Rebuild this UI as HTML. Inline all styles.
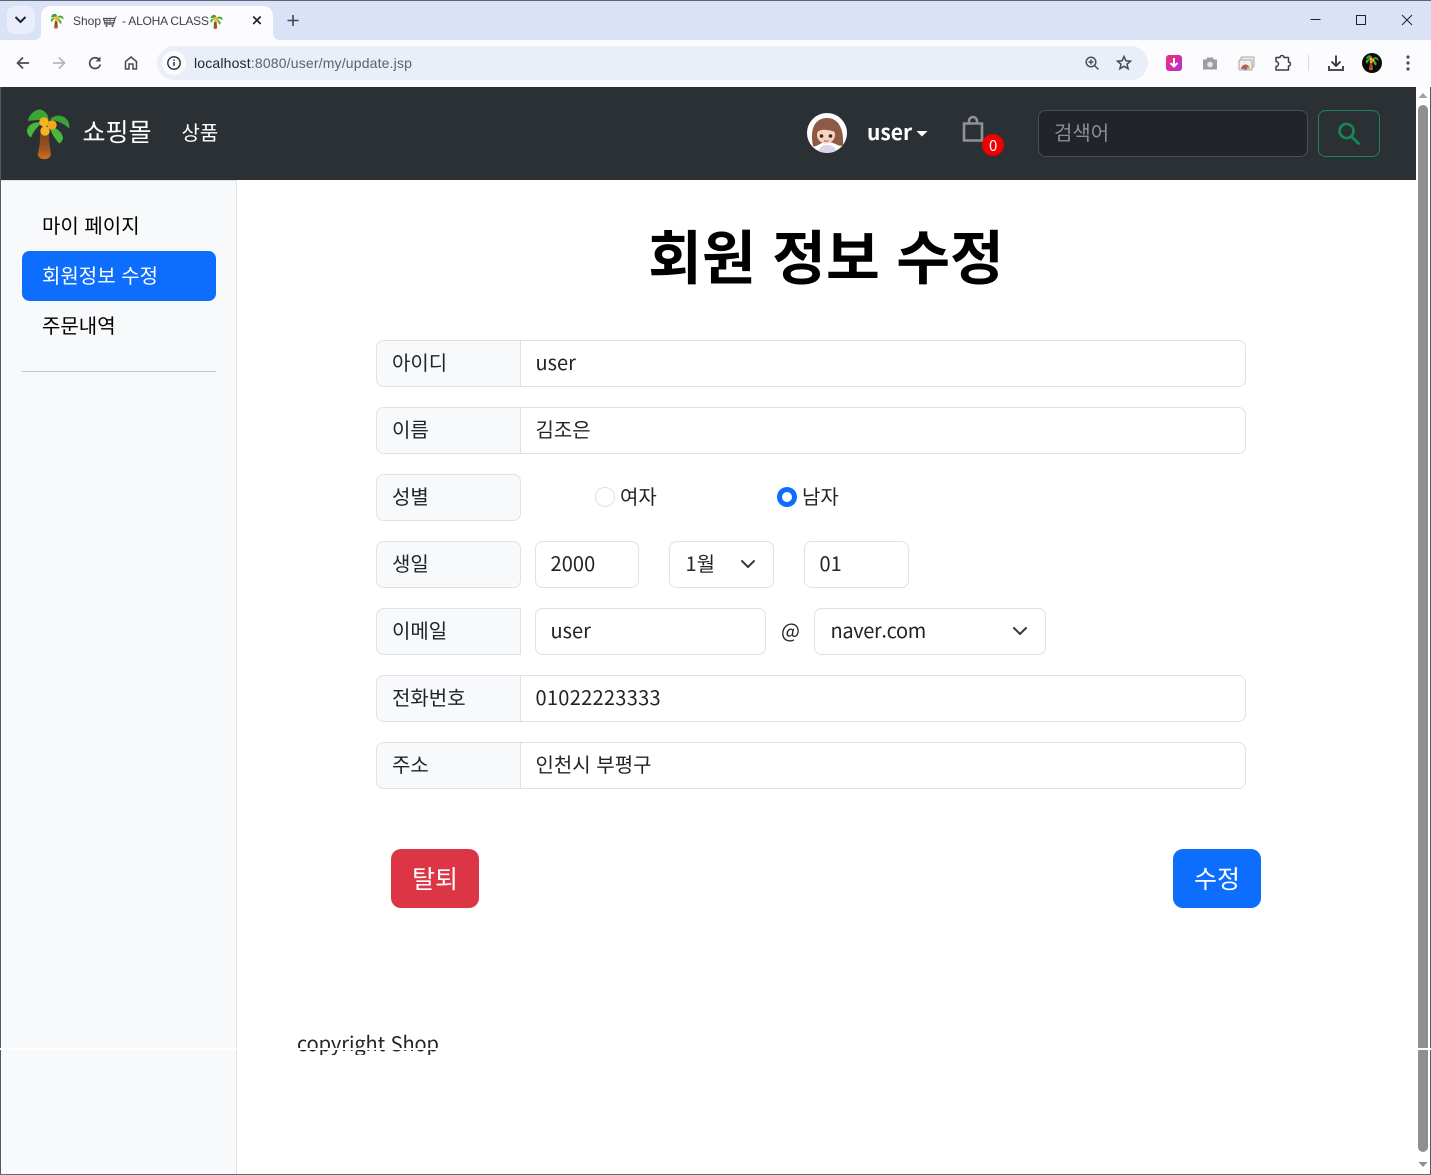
<!DOCTYPE html>
<html lang="ko"><head><meta charset="utf-8"><title>Shop</title>
<style>
*{box-sizing:border-box}
html,body{margin:0;padding:0}
body{position:relative;width:1431px;height:1175px;overflow:hidden;background:#fff;font-family:"Liberation Sans","Noto Sans CJK KR",sans-serif}
.a{position:absolute}
.t{position:absolute;white-space:nowrap;font-family:"Noto Sans CJK KR","Liberation Sans",sans-serif;font-size:20px;line-height:30px;color:#212529}
.box{position:absolute;border:1px solid #dee2e6;border-radius:7.5px;background:#fff}
.lab{position:absolute;left:376px;width:145px;height:47px;border:1px solid #dee2e6;border-radius:7.5px 0 0 7.5px;background:#f8f9fa}
.lab.full{border-radius:7.5px}
.inp{position:absolute;left:520px;width:726px;height:47px;border:1px solid #dee2e6;border-radius:0 7.5px 7.5px 0;background:#fff}
svg{position:absolute;overflow:visible}
</style></head><body>

<!-- browser chrome -->
<div class="a" style="left:0;top:0;width:1431px;height:40px;background:#d9e2f6"></div>
<div class="a" style="left:0;top:0;width:1431px;height:1px;background:#5f6672"></div>
<div class="a" style="left:7px;top:6px;width:28px;height:28px;border-radius:8px;background:#e9eefa"></div>
<svg style="left:0;top:0" width="1431" height="87">
<defs>
<linearGradient id="tr" x1="0" y1="0" x2="0" y2="1"><stop offset="0" stop-color="#7a4420"/><stop offset=".6" stop-color="#9c5522"/><stop offset="1" stop-color="#d4701c"/></linearGradient>
<g id="palm">
<path d="M14 25L23 25C23 34 24 40 25 45C25 50 20 51 17 50.500C13 50 11 47 12 44C14 37 14 32 14 25Z" fill="url(#tr)"/>
<path d="M22 14C18 10 8 12 2 12.500C3 5 10 1 14 1C20 2 24 8 22 14Z" fill="#3aa535"/>
<path d="M16 14C8 13 2 16 1 22C1 25 3 28 5 29C7 23 11 19 16 14Z" fill="#48b83c"/>
<path d="M24 11C28 6 36 6 40 10C43 13 44 17 43 20C38 15 31 12 24 11Z" fill="#38a334"/>
<path d="M24 18C31 19 36 24 37 29C37 32 35 34 33 35C29 30 25 25 24 18Z" fill="#48b83c"/>
<circle cx="18" cy="13.500" r="4.700" fill="#f7b422"/><circle cx="26" cy="16.500" r="4.700" fill="#f2a81e"/><circle cx="19" cy="22.500" r="4.700" fill="#f7b422"/>
</g>
</defs>
<path d="M15.500 18l5 5 5-5" transform="translate(0,-1)" fill="none" stroke="#1f2329" stroke-width="2"/>
<path d="M33 40C39 40 41 38 41 32V16C41 10 45 6 51 6H263C269 6 273 10 273 16V32C273 38 275 40 281 40Z" fill="#fcfcfe"/>
<path d="M0 40H1431V87H0Z" fill="#fcfcfe"/>
<g transform="translate(50.500,13.500) scale(.3)"><use href="#palm"/></g>
<path d="M103.500 18.500h11.500l-1.500 5.500h-8.500z" fill="none" stroke="#4a5058" stroke-width="1.200"/>
<path d="M104 20.500h10.500M105 22.500h9M107 18.500v5.500M110 18.500v5.500M115 18.500l1.500-2.500" stroke="#4a5058" stroke-width=".8" fill="none"/>
<circle cx="106.500" cy="26" r="1" fill="#4a5058"/><circle cx="112.500" cy="26" r="1" fill="#4a5058"/>
<g transform="translate(210,14.500) scale(.29)"><use href="#palm"/></g>
<path d="M253.200 16.500l7.500 7.500M260.700 16.500l-7.500 7.500" stroke="#1f2329" stroke-width="1.700"/>
<path d="M293 15v11M287.500 20.500h11" stroke="#444950" stroke-width="1.600"/>
<path d="M1310.500 19.500h10" stroke="#1f2329" stroke-width="1"/>
<rect x="1356.500" y="15.500" width="9" height="9" fill="none" stroke="#1f2329" stroke-width="1"/>
<path d="M1402 15l10 10M1412 15l-10 10" stroke="#1f2329" stroke-width="1"/>
<!-- nav buttons -->
<path d="M29 63H18M23 57.500L17.500 63l5.500 5.500" fill="none" stroke="#474c52" stroke-width="1.700"/>
<path d="M53 63H64M59 57.500L64.500 63 59 68.500" fill="none" stroke="#b3b6bb" stroke-width="1.700"/>
<path d="M99.500 60A5.400 5.400 0 1 0 100.300 64.500" fill="none" stroke="#474c52" stroke-width="1.700"/><path d="M100.500 56.500v5h-5z" fill="#474c52"/>
<path d="M125.500 69V61.500L131 57l5.500 4.500V69H133V64H129V69Z" fill="none" stroke="#474c52" stroke-width="1.500"/>
<!-- omnibox -->
<rect x="157" y="46" width="991" height="34" rx="17" fill="#e9eef8"/>
<circle cx="174" cy="63" r="12" fill="#fcfcfe"/>
<circle cx="174" cy="63" r="6.200" fill="none" stroke="#262a2f" stroke-width="1.400"/>
<path d="M174 62v4M174 59.500v1.500" stroke="#262a2f" stroke-width="1.400"/>
<circle cx="1091" cy="62" r="4.800" fill="none" stroke="#4a4f55" stroke-width="1.500"/><path d="M1094.500 65.500l4 4M1091 59.500v5M1088.500 62h5" stroke="#4a4f55" stroke-width="1.400"/>
<path d="M1124 56.500l1.900 4.300 4.600.400-3.500 3 1.100 4.500-4.100-2.400-4.100 2.400 1.100-4.500-3.500-3 4.600-.400z" fill="none" stroke="#474c52" stroke-width="1.500"/>
<!-- extensions -->
<defs><linearGradient id="pk" x1="0" y1="0" x2="1" y2="1"><stop offset="0" stop-color="#ef2f78"/><stop offset="1" stop-color="#b52fd0"/></linearGradient></defs>
<rect x="1166" y="55" width="16" height="16" rx="3" fill="url(#pk)"/>
<path d="M1174 58v8M1170.500 63l3.500 3.500 3.500-3.500" fill="none" stroke="#fff" stroke-width="2"/>
<path d="M1203 59.500h3l1.200-2h5.600l1.200 2h3v10h-14z" fill="#9a9da1"/><circle cx="1210" cy="64.500" r="2.800" fill="#e6e7e8"/>
<rect x="1241" y="57" width="13" height="10" rx="1" fill="#f3f0ea" stroke="#a5a5a5"/>
<rect x="1239" y="60" width="13" height="10" rx="1" fill="#eee" stroke="#a5a5a5"/>
<path d="M1241 69a4.500 4.500 0 0 1 9 0z" fill="#d9503f"/><path d="M1245.500 69h4.500a4 4 0 0 0-1-3z" fill="#e8b52f"/><circle cx="1245.500" cy="68.500" r="1.500" fill="#3f7fd8"/>
<path d="M1276 57.500h4a2 2 0 0 1 4 0h4.500v4.500a2 2 0 0 1 0 4v4h-12.500v-3.500a2.500 2.500 0 0 0 0-5z" fill="none" stroke="#3a3f45" stroke-width="1.500" stroke-linejoin="round"/>
<path d="M1308.500 55v16" stroke="#d4e0f0" stroke-width="1.200"/>
<path d="M1336 55.500v10M1331.500 61.500l4.500 4.500 4.500-4.500M1329 66v4h14v-4" fill="none" stroke="#30353a" stroke-width="1.800"/>
<circle cx="1372" cy="63" r="10" fill="#0b0b0b"/>
<g transform="translate(1365.500,55) scale(.3)"><use href="#palm"/></g>
<circle cx="1408" cy="57" r="1.600" fill="#474c52"/><circle cx="1408" cy="63" r="1.600" fill="#474c52"/><circle cx="1408" cy="69" r="1.600" fill="#474c52"/>
</svg>
<div class="a" style="left:73px;top:14px;font-size:12px;line-height:15px;color:#3c4046;white-space:nowrap">Shop</div>
<div class="a" style="left:122px;top:14px;font-size:12px;line-height:15px;color:#3c4046;white-space:nowrap;letter-spacing:-.2px">- ALOHA CLASS</div>
<div class="a" style="left:194px;top:55px;font-size:14px;line-height:16px;color:#1f2329;white-space:nowrap;letter-spacing:.17px">localhost<span style="color:#5d6169">:8080/user/my/update.jsp</span></div>

<!-- navbar -->
<div class="a" style="left:1px;top:87px;width:1415px;height:93px;background:#2b3035"></div>
<svg style="left:0;top:0" width="1431" height="180">
<g transform="translate(26,108.500)"><use href="#palm"/></g>
<!-- avatar -->
<circle cx="827" cy="133" r="20" fill="#fff"/>
<clipPath id="av"><circle cx="827" cy="133" r="20"/></clipPath>
<g clip-path="url(#av)">
<path d="M813 146C810 132 813 119 826 118C840 117 844 132 843 145C839 148 836 142 827 142C820 142 816 148 813 146Z" fill="#8c5a45"/>
<ellipse cx="826" cy="135" rx="9" ry="8.500" fill="#f6d3c3"/>
<path d="M816 133C818 124 830 120 837 132C830 131 822 127 816 133Z" fill="#8c5a45"/>
<circle cx="821.500" cy="136" r="1.800" fill="#3a2320"/><circle cx="830.500" cy="136" r="1.800" fill="#3a2320"/>
<path d="M824 140.500q2 1.500 4.500 0" stroke="#c25a5a" stroke-width="1.100" fill="none"/>
<path d="M817 154c2-7 6-9 10-9s9 2 11 9z" fill="#dcd4ea"/>
</g>
<path d="M916.500 131h11l-5.500 5.500z" fill="#fff"/>
<!-- bag -->
<path d="M969 124v-3a4 4 0 0 1 8 0v3" fill="none" stroke="#8e9195" stroke-width="2.600"/>
<path d="M964 123.500h18v17h-18z" fill="none" stroke="#8e9195" stroke-width="2.600"/>
<circle cx="993" cy="145" r="11" fill="#f00000"/>
<!-- search -->
<circle cx="1346.500" cy="131" r="7" fill="none" stroke="#198754" stroke-width="2.600"/>
<path d="M1351.500 136.500l7 7" stroke="#198754" stroke-width="2.800" stroke-linecap="round"/>
</svg>
<div class="t" style="left:82.500px;top:113px;font-size:25px;line-height:36px;color:#fff">쇼핑몰</div>
<div class="t" style="left:181.500px;top:117px;color:#fff">상품</div>
<div class="t" style="left:867px;top:117px;color:#fff;font-weight:700;font-size:21px">user</div>
<div class="t" style="left:989px;top:137px;color:#fff;font-size:15px;line-height:17px">0</div>
<div class="box" style="left:1038px;top:110px;width:270px;height:47px;background:#212529;border-color:#495057"></div>
<div class="t" style="left:1054px;top:117px;color:#8b8f93">검색어</div>
<div class="box" style="left:1318px;top:110px;width:62px;height:47px;background:transparent;border-color:#198754"></div>

<!-- sidebar -->
<div class="a" style="left:1px;top:180px;width:236px;height:994px;background:#f8f9fa;border-right:1px solid #dee2e6;border-top:1px solid #dee2e6"></div>
<div class="t" style="left:42px;top:210px;color:#000">마이 페이지</div>
<div class="a" style="left:22px;top:251px;width:194px;height:50px;background:#0d6efd;border-radius:7.5px"></div>
<div class="t" style="left:42px;top:260px;color:#fff">회원정보 수정</div>
<div class="t" style="left:42px;top:310px;color:#000">주문내역</div>
<div class="a" style="left:22px;top:371px;width:194px;height:1px;background:#c1c3c6"></div>

<!-- main -->
<div class="t" style="left:437px;top:212px;width:778px;text-align:center;font-size:58.500px;line-height:84px;font-weight:700;color:#000">회원 정보 수정</div>

<div class="lab" style="top:340px"></div><div class="inp" style="top:340px"></div>
<div class="t" style="left:392px;top:347px">아이디</div><div class="t" style="left:535.500px;top:347px">user</div>

<div class="lab" style="top:407px"></div><div class="inp" style="top:407px"></div>
<div class="t" style="left:392px;top:414px">이름</div><div class="t" style="left:535.500px;top:414px">김조은</div>

<div class="lab full" style="top:474px"></div>
<div class="t" style="left:392px;top:481px">성별</div>
<div class="a" style="left:595px;top:487px;width:20px;height:20px;border-radius:50%;border:1px solid #dee2e6;background:#fff"></div>
<div class="t" style="left:620px;top:481px">여자</div>
<div class="a" style="left:777px;top:487px;width:20px;height:20px;border-radius:50%;background:#0d6efd"></div>
<div class="a" style="left:782px;top:492px;width:10px;height:10px;border-radius:50%;background:#fff"></div>
<div class="t" style="left:802px;top:481px">남자</div>

<div class="lab full" style="top:541px"></div>
<div class="t" style="left:392px;top:548px">생일</div>
<div class="box" style="left:535px;top:541px;width:104px;height:47px"></div>
<div class="t" style="left:550.500px;top:548px;letter-spacing:.1px">2000</div>
<div class="box" style="left:669px;top:541px;width:105px;height:47px"></div>
<div class="t" style="left:685.500px;top:548px">1월</div>
<div class="box" style="left:804px;top:541px;width:105px;height:47px"></div>
<div class="t" style="left:819.500px;top:548px">01</div>

<div class="lab full" style="top:608px;border-radius:7.5px 0 0 7.5px"></div>
<div class="t" style="left:392px;top:615px">이메일</div>
<div class="box" style="left:535px;top:608px;width:231px;height:47px"></div>
<div class="t" style="left:550.500px;top:615px">user</div>
<div class="t" style="left:781px;top:615px">@</div>
<div class="box" style="left:814px;top:608px;width:232px;height:47px"></div>
<div class="t" style="left:830.500px;top:615px;letter-spacing:-.35px">naver.com</div>

<svg style="left:0;top:0" width="1431" height="700">
<path d="M742 561l6 6 6-6" fill="none" stroke="#343a40" stroke-width="2" stroke-linecap="round" stroke-linejoin="round"/>
<path d="M1014 628l6 6 6-6" fill="none" stroke="#343a40" stroke-width="2" stroke-linecap="round" stroke-linejoin="round"/>
</svg>

<div class="lab" style="top:675px"></div><div class="inp" style="top:675px"></div>
<div class="t" style="left:392px;top:682px">전화번호</div><div class="t" style="left:535.500px;top:682px;letter-spacing:.3px">01022223333</div>

<div class="lab" style="top:742px"></div><div class="inp" style="top:742px"></div>
<div class="t" style="left:392px;top:749px">주소</div><div class="t" style="left:535.500px;top:749px">인천시 부평구</div>

<div class="a" style="left:391px;top:849px;width:88px;height:59px;background:#dc3545;border-radius:10px"></div>
<div class="t" style="left:391px;top:860px;width:88px;text-align:center;color:#fff;font-size:25px;line-height:36px">탈퇴</div>
<div class="a" style="left:1173px;top:849px;width:88px;height:59px;background:#0d6efd;border-radius:10px"></div>
<div class="t" style="left:1173px;top:860px;width:88px;text-align:center;color:#fff;font-size:25px;line-height:36px">수정</div>

<!-- footer (clipped) -->
<div class="a" style="left:297px;top:1025px;width:200px;height:30px;overflow:hidden">
<div class="t" style="left:0;top:3px;letter-spacing:-.08px">copyright Shop</div>
</div>
<div class="a" style="left:0;top:1048px;width:1431px;height:2px;background:#fff"></div>

<!-- scrollbar -->
<div class="a" style="left:1416px;top:87px;width:15px;height:1088px;background:#fff"></div>
<div class="a" style="left:1418px;top:105px;width:10px;height:1047px;border-radius:5px;background:#8f8f8f"></div>
<div class="a" style="left:1416px;top:1048px;width:15px;height:2px;background:#fff"></div>
<svg style="left:0;top:0" width="1431" height="1175">
<path d="M1423 93l4.500 5h-9z" fill="#a0a0a0"/>
<path d="M1423 1167l4.500-5h-9z" fill="#8f8f8f"/>
</svg>
<div class="a" style="left:1430px;top:87px;width:1px;height:1088px;background:#55585c"></div>
<div class="a" style="left:0;top:87px;width:1px;height:1088px;background:#55585c"></div>
<div class="a" style="left:0;top:1174px;width:1431px;height:1px;background:#6a6d70"></div>
<div class="a" style="left:0;top:1048px;width:1px;height:2px;background:#fff"></div>
<div class="a" style="left:1430px;top:1048px;width:1px;height:2px;background:#fff"></div>
</body></html>
